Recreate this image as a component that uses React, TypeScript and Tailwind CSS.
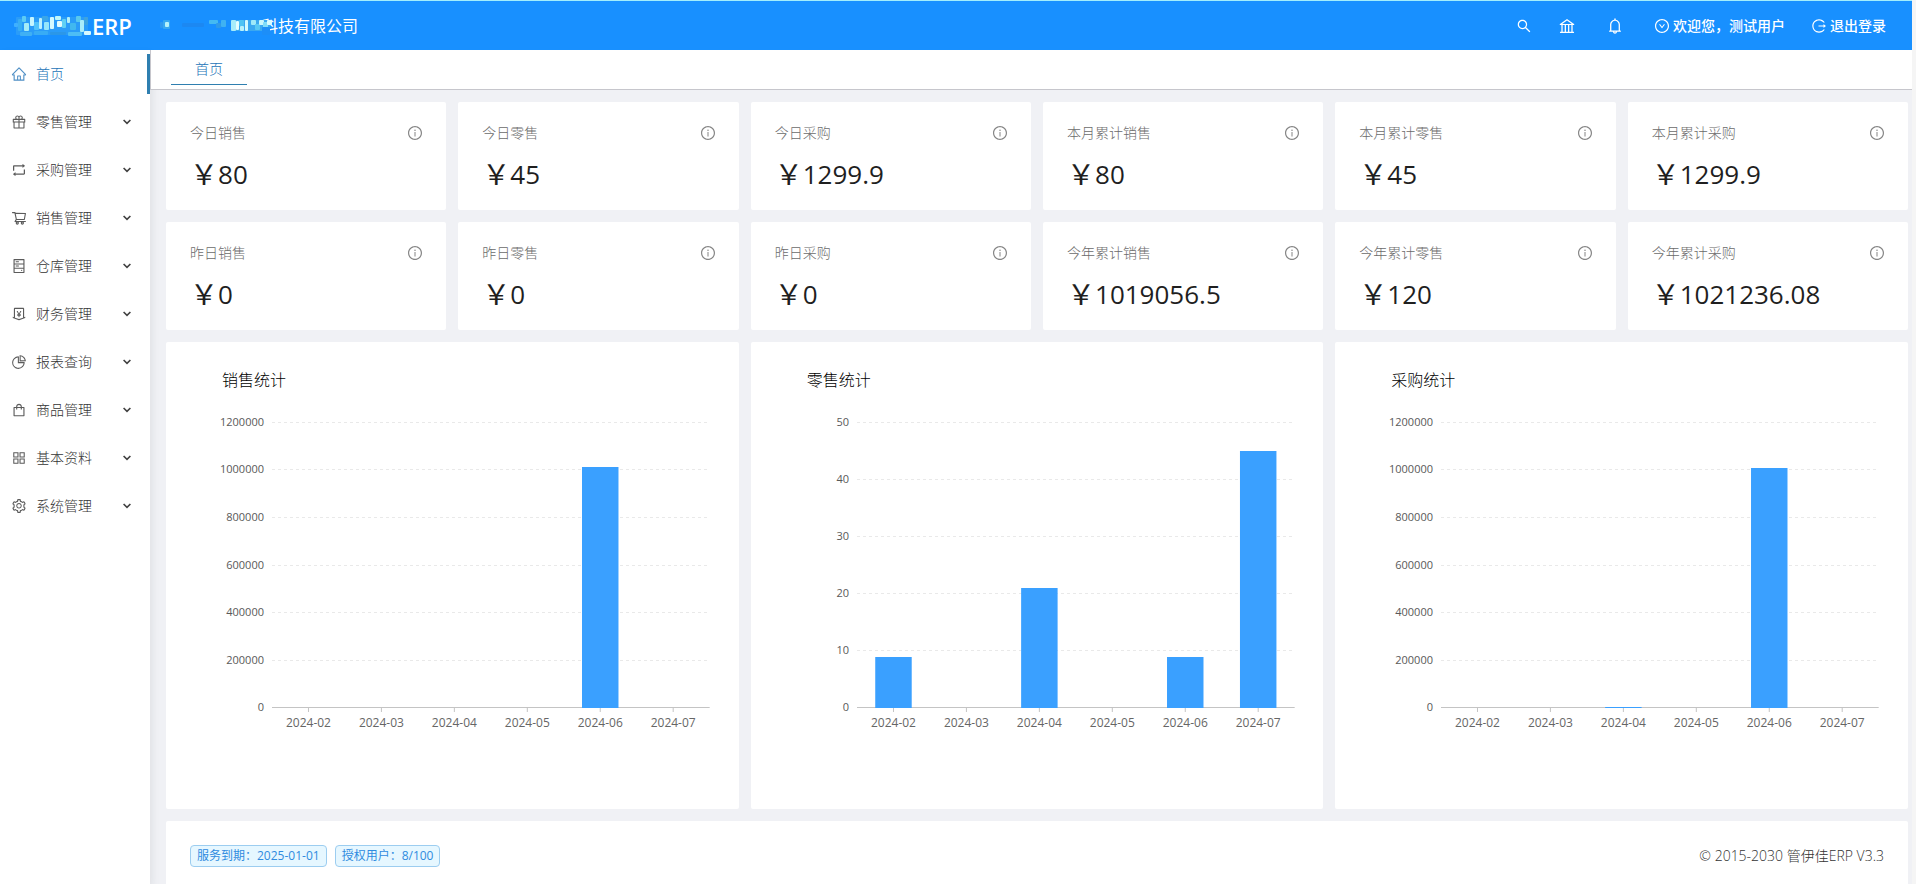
import React, { useState } from 'react'
import type { IconType } from 'react-icons'
import {
  AiOutlineAppstore,
  AiOutlineBank,
  AiOutlineBell,
  AiOutlineDownCircle,
  AiOutlineGift,
  AiOutlineHdd,
  AiOutlineHome,
  AiOutlineInfoCircle,
  AiOutlineLogout,
  AiOutlineMoneyCollect,
  AiOutlinePieChart,
  AiOutlineRetweet,
  AiOutlineSearch,
  AiOutlineSetting,
  AiOutlineShopping,
  AiOutlineShoppingCart,
} from 'react-icons/ai'

interface MenuEntry {
  label: string
  icon: IconType
  children?: boolean
}

interface Stat {
  title: string
  value: string
}

interface ChartData {
  title: string
  max: number
  step: number
  values: number[]
}

const menu: MenuEntry[] = [
  { label: '首页', icon: AiOutlineHome },
  { label: '零售管理', icon: AiOutlineGift, children: true },
  { label: '采购管理', icon: AiOutlineRetweet, children: true },
  { label: '销售管理', icon: AiOutlineShoppingCart, children: true },
  { label: '仓库管理', icon: AiOutlineHdd, children: true },
  { label: '财务管理', icon: AiOutlineMoneyCollect, children: true },
  { label: '报表查询', icon: AiOutlinePieChart, children: true },
  { label: '商品管理', icon: AiOutlineShopping, children: true },
  { label: '基本资料', icon: AiOutlineAppstore, children: true },
  { label: '系统管理', icon: AiOutlineSetting, children: true },
]

const stats: Stat[] = [
  { title: '今日销售', value: '80' },
  { title: '今日零售', value: '45' },
  { title: '今日采购', value: '1299.9' },
  { title: '本月累计销售', value: '80' },
  { title: '本月累计零售', value: '45' },
  { title: '本月累计采购', value: '1299.9' },
  { title: '昨日销售', value: '0' },
  { title: '昨日零售', value: '0' },
  { title: '昨日采购', value: '0' },
  { title: '今年累计销售', value: '1019056.5' },
  { title: '今年累计零售', value: '120' },
  { title: '今年累计采购', value: '1021236.08' },
]

const months = ['2024-02', '2024-03', '2024-04', '2024-05', '2024-06', '2024-07']

const charts: ChartData[] = [
  { title: '销售统计', max: 1200000, step: 200000, values: [0, 0, 0, 0, 1015000, 80] },
  { title: '零售统计', max: 50, step: 10, values: [9, 0, 21, 0, 9, 45] },
  { title: '采购统计', max: 1200000, step: 200000, values: [0, 0, 5200, 1900, 1010000, 1299] },
]

const PLOT_HEIGHT = 285

// [x, y, width, height, colour]
type Cell = [number, number, number, number, string]

const logoCells: Cell[] = [
  [2, 2, 72, 18, '#2a9cf8'], [0, 8, 4, 4, '#3fb0ff'], [4, 4, 4, 12, '#38aef4'], [8, 1, 4, 6, '#5ccbf5'],
  [10, 8, 5, 8, '#a5ecf7'], [16, 2, 4, 9, '#c5f5ff'], [20, 7, 5, 8, '#4fc2fb'], [25, 3, 3, 11, '#b9f0ff'],
  [28, 1, 6, 5, '#3aa6e8'], [30, 7, 5, 8, '#93e6fb'], [36, 2, 4, 12, '#d3f9ff'], [41, 1, 6, 4, '#bff6fb'],
  [43, 6, 5, 6, '#e0fcff'], [48, 4, 4, 9, '#5fd0f4'], [53, 2, 3, 6, '#b4f0f8'], [56, 8, 6, 7, '#41b8ef'],
  [62, 1, 5, 6, '#58c8ee'], [66, 5, 4, 12, '#a8ecfa'], [70, 2, 4, 8, '#3da3df'], [70, 16, 7, 4, '#d7f9ff'],
  [6, 17, 12, 4, '#3fb0f4'], [20, 16, 14, 4, '#38acf5'], [36, 17, 16, 3, '#2b97e8'], [54, 17, 14, 4, '#4dbdf5'],
]

const companyCells: Cell[] = [
  [0, 5, 3, 6, '#2f9af0'], [3, 3, 7, 9, '#37a9f2'], [5, 5, 4, 5, '#b6f3fb'], [22, 6, 22, 4, '#1c88f2'],
  [49, 3, 9, 4, '#44baf2'], [56, 6, 5, 5, '#2f9ae8'], [61, 3, 5, 7, '#3fb2f2'], [72, 3, 38, 11, '#3aa8f0'],
  [71, 3, 5, 11, '#a6ecfa'], [76, 4, 3, 9, '#e2fdff'], [79, 3, 5, 6, '#4fc4f4'], [80, 9, 4, 5, '#b9f2fb'],
  [85, 3, 3, 11, '#d3faff'], [91, 3, 5, 5, '#9ee9f9'], [95, 7, 5, 6, '#58c8f4'], [99, 3, 5, 5, '#c8f6fd'],
  [103, 5, 5, 8, '#7fdcf8'], [107, 3, 5, 5, '#d9fbff'], [102, 10, 8, 8, '#1c8ef8'],
]

function Mosaic({ cells, className }: { cells: Cell[]; className: string }) {
  return (
    <svg className={className} aria-hidden="true">
      {cells.map(([x, y, w, h, fill], i) => (
        <rect key={i} x={x} y={y} width={w} height={h} rx="1" fill={fill} />
      ))}
    </svg>
  )
}

function Header() {
  return (
    <header className="flex h-[50px] items-center border-t border-[#a3eefc] bg-[#1890ff] pr-[26px] text-white">
      <a href="#" className="flex w-36 items-center pl-[14px] text-[22px] leading-8 font-semibold">
        <Mosaic cells={logoCells} className="h-[22px] w-[78px]" />
        ERP
      </a>
      <div className="flex flex-1 items-center pl-4 text-base">
        <Mosaic cells={companyCells} className="relative -mr-3 h-[18px] w-[114px] shrink-0" />
        科技有限公司
      </div>
      <nav className="flex items-center gap-[26px] text-sm font-medium">
        <button type="button" aria-label="搜索">
          <AiOutlineSearch className="size-4" />
        </button>
        <button type="button" aria-label="机构">
          <AiOutlineBank className="size-[18px]" />
        </button>
        <button type="button" aria-label="消息" className="mx-1">
          <AiOutlineBell className="size-[18px]" />
        </button>
        <button type="button" className="flex items-center gap-[3px]">
          <AiOutlineDownCircle className="size-4" />
          欢迎您，测试用户
        </button>
        <a href="#" className="flex items-center gap-[3px]">
          <AiOutlineLogout className="size-4" />
          退出登录
        </a>
      </nav>
    </header>
  )
}

function Sidebar() {
  const [active, setActive] = useState('首页')

  return (
    <aside className="relative z-10 w-[150px] shrink-0 bg-white shadow-[2px_4px_8px_rgba(29,35,41,0.08)]">
      <ul className="flex flex-col gap-2 pt-1">
        {menu.map(({ label, icon: Icon, children }) => (
          <li key={label}>
            <button
              type="button"
              onClick={() => setActive(label)}
              className={`flex h-10 w-full items-center border-r-[3px] pr-4 pl-[11px] text-sm font-light ${
                active === label ? 'border-[#2f7fb0] text-[#2474b8]' : 'border-transparent text-[#333333]'
              }`}
            >
              <Icon className="mr-[9px] size-4 opacity-80" />
              <span className="flex-1 text-left">{label}</span>
              {children && (
                <svg viewBox="0 0 8 6" className="h-[6px] w-2" fill="none" stroke="#404040" strokeWidth="1.6">
                  <path d="M0.6 1 L4 4.4 L7.4 1" />
                </svg>
              )}
            </button>
          </li>
        ))}
      </ul>
    </aside>
  )
}

function StatCard({ title, value }: Stat) {
  return (
    <section className="rounded-xs bg-white pt-5 pr-[23px] pb-[17px] pl-6">
      <div className="flex items-center justify-between text-sm leading-[22px] font-light text-[#6b6b6b]">
        <h2>{title}</h2>
        <AiOutlineInfoCircle className="size-4 text-[#858585]" />
      </div>
      <p className="mt-[11px] flex h-[38px] items-center text-[26px] leading-[38px] text-[#1f1f1f]">
        <span className="text-[28px]">￥</span>
        {value}
      </p>
    </section>
  )
}

function BarChart({ title, max, step, values }: ChartData) {
  const ticks = Array.from({ length: max / step + 1 }, (_, i) => i * step)
  const yOf = (v: number) => Math.round(PLOT_HEIGHT * (1 - v / max))
  const band = 100 / months.length

  return (
    <section className="h-[467px] rounded-xs bg-white pt-[26px] pr-[29px] pl-[106px]">
      <h2 className="-ml-[50px] text-base leading-6 font-light text-black">{title}</h2>
      <svg className="mt-[30px] h-[310px] w-full overflow-visible" role="img" aria-label={title}>
        {ticks.map((t) => (
          <g key={t}>
            {t > 0 && (
              <line
                x1="0"
                x2="100%"
                y1={yOf(t) + 0.5}
                y2={yOf(t) + 0.5}
                stroke="#e9e9e9"
                strokeDasharray="3 3"
              />
            )}
            <text x="-8" y={yOf(t) + 4} textAnchor="end" className="fill-[#595959] text-[11px]">
              {t}
            </text>
          </g>
        ))}
        <line x1="0" x2="100%" y1={PLOT_HEIGHT + 0.5} y2={PLOT_HEIGHT + 0.5} stroke="#c4c4c4" />
        {months.map((month, i) => (
          <g key={month}>
            <line
              x1={`${band * (i + 0.5)}%`}
              x2={`${band * (i + 0.5)}%`}
              y1={PLOT_HEIGHT}
              y2={PLOT_HEIGHT + 5}
              stroke="#c4c4c4"
            />
            <rect
              x={`${band * (i + 0.25)}%`}
              y={yOf(values[i]) + 1}
              width={`${band / 2}%`}
              height={PLOT_HEIGHT - yOf(values[i])}
              fill="#3aa0ff"
            />
            <text
              x={`${band * (i + 0.5)}%`}
              y={PLOT_HEIGHT + 20}
              textAnchor="middle"
              className="fill-[#666666] text-xs"
            >
              {month}
            </text>
          </g>
        ))}
      </svg>
    </section>
  )
}

function Tag({ children }: { children: React.ReactNode }) {
  return (
    <span className="rounded border border-[#9ccdf0] bg-[#e6f7ff] px-[6px] text-xs leading-5 text-[#2f8be0]">
      {children}
    </span>
  )
}

function App(): React.ReactElement {
  return (
    <div className="flex min-h-screen flex-col bg-[#f5f5f5] pr-1 font-['Open_Sans','Noto_Sans_CJK_SC',sans-serif]">
      <Header />
      <div className="flex flex-1">
        <Sidebar />
        <div className="flex min-w-0 flex-1 flex-col bg-[#f0f1f5]">
          <div className="relative z-20 flex h-10 items-start border-b border-l border-[#c6c6cc] bg-white px-5 pt-[3px]">
            <button
              type="button"
              className="h-8 border-b border-[#2f7fb0] px-6 text-sm font-light text-[#2474b8]"
            >
              首页
            </button>
          </div>
          <main className="flex flex-1 flex-col gap-3 pt-3 pr-1 pl-4">
            <div className="grid grid-cols-6 gap-3">
              {stats.map((s) => (
                <StatCard key={s.title} {...s} />
              ))}
            </div>
            <div className="grid grid-cols-3 gap-3">
              {charts.map((c) => (
                <BarChart key={c.title} {...c} />
              ))}
            </div>
            <footer className="flex flex-1 items-start justify-between rounded-t-xs bg-white px-6 pt-6">
              <div className="flex gap-2">
                <Tag>服务到期：2025-01-01</Tag>
                <Tag>授权用户：8/100</Tag>
              </div>
              <p className="text-sm leading-[22px] font-light text-[#333333]">© 2015-2030 管伊佳ERP V3.3</p>
            </footer>
          </main>
        </div>
      </div>
    </div>
  )
}

export default App
